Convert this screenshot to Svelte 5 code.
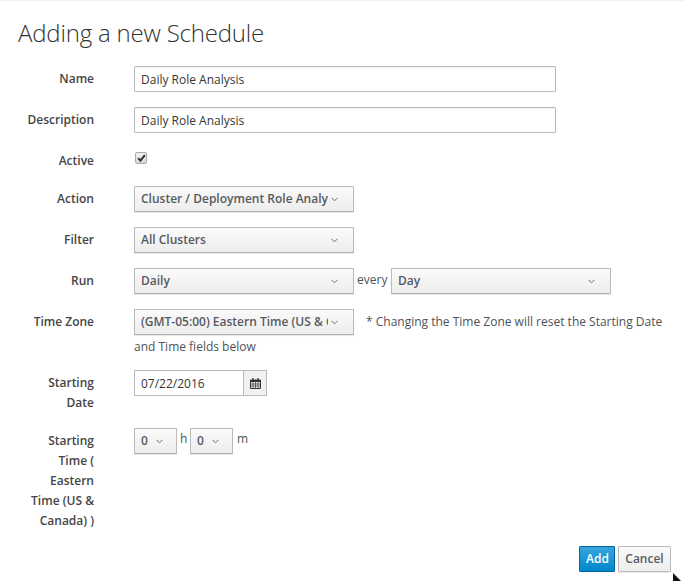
<script>
	const hours = ['0', '0'];
</script>

{#snippet chevron()}
	<svg class="chev" width="7" height="5" viewBox="0 0 7 5"><path d="M0.5 0.8 L3.5 3.8 L6.5 0.8" fill="none" stroke="#6a6e71" stroke-width="1" /></svg>
{/snippet}

{#snippet dropdown(text, cls)}
	<button type="button" class={'select ' + cls}>
		<span class="select-text">{text}</span>
		{@render chevron()}
	</button>
{/snippet}

<div class="modal">
	<h2 class="title">Adding a new Schedule</h2>

	<form class="form">
		<div class="row">
			<label class="label" for="name">Name</label>
			<input id="name" class="input" value="Daily Role Analysis" />
		</div>
		<div class="row">
			<label class="label" for="desc">Description</label>
			<input id="desc" class="input" value="Daily Role Analysis" />
		</div>
		<div class="row row-active">
			<span class="label">Active</span>
			<span class="check">
				<svg width="9" height="8" viewBox="0 0 10 9"><path d="M1.2 4.6 L3.8 7.4 L8.8 1.2" fill="none" stroke="#333" stroke-width="2.3" /></svg>
			</span>
		</div>
		<div class="row">
			<span class="label">Action</span>
			{@render dropdown('Cluster / Deployment Role Analysis', 'wide')}
		</div>
		<div class="row">
			<span class="label">Filter</span>
			{@render dropdown('All Clusters', 'wide')}
		</div>
		<div class="row">
			<span class="label">Run</span>
			<div class="inline">
				{@render dropdown('Daily', 'wide')}
				<span class="unit every">every</span>
				{@render dropdown('Day', 'wide')}
			</div>
		</div>
		<div class="row row-zone">
			<span class="label">Time Zone</span>
			<div class="zone">
				{@render dropdown('(GMT-05:00) Eastern Time (US & Canada)', 'wide')}
				<span class="zone-note"> * Changing the Time Zone will reset the Starting Date and Time fields below</span>
			</div>
		</div>
		<div class="row row-date">
			<span class="label">Starting Date</span>
			<div class="date-group">
				<input class="date-input" value="07/22/2016" />
				<span class="date-addon">
					<svg width="11" height="11" viewBox="0 0 11 11">
						<path d="M0.5 2 H10.5 V10.5 H0.5 Z" fill="none" stroke="#333" />
						<path d="M0.5 2 H10.5 V4 H0.5 Z" fill="#333" />
						<path d="M3 0 V2.5 M8 0 V2.5" stroke="#333" stroke-width="1.2" />
						<path d="M3 4 V10 M5.5 4 V10 M8 4 V10 M1 6 H10 M1 8 H10" stroke="#333" stroke-width="0.7" />
					</svg>
				</span>
			</div>
		</div>
		<div class="row">
			<span class="label">Starting Time ( Eastern Time (US & Canada) )</span>
			<div class="inline">
				{@render dropdown(hours[0], 'small')}
				<span class="unit unit-h">h</span>
				{@render dropdown(hours[1], 'small')}
				<span class="unit unit-m">m</span>
			</div>
		</div>
	</form>

	<div class="footer">
		<button type="button" class="btn btn-primary">Add</button>
		<button type="button" class="btn btn-default">Cancel</button>
	</div>

	<svg class="cursor" width="9" height="9" viewBox="0 0 9 9"><path d="M0 0 L8 8 H0 Z" fill="#111" /></svg>
</div>

<style>
	:global(body) {
		margin: 0;
		background: #fff;
	}

	.modal {
		position: relative;
		box-sizing: border-box;
		width: 684px;
		height: 583px;
		border-top: 1px solid #f2f2f2;
		font-family: 'Open Sans', sans-serif;
		font-size: 12px;
		line-height: 20px;
		color: #363636;
	}

	.title {
		margin: 0;
		padding: 15px 0 0 18px;
		height: 50px;
		box-sizing: border-box;
		font-size: 24px;
		font-weight: 300;
		line-height: 34px;
		letter-spacing: -0.19px;
		color: #333;
	}

	.form {
		display: flex;
		flex-direction: column;
		padding-top: 15px;
	}

	.row {
		display: flex;
		align-items: flex-start;
		margin-bottom: 15px;
	}

	.row-active {
		height: 23px;
	}

	.row-zone {
		margin-bottom: 0;
		height: 61px;
	}

	.row-date {
		height: 43px;
	}

	.label {
		flex: none;
		box-sizing: content-box;
		width: 70px;
		margin-left: 24px;
		margin-right: 40px;
		padding-top: 3px;
		text-align: right;
		font-weight: 600;
		color: #454545;
	}

	.input {
		box-sizing: border-box;
		width: 422px;
		height: 26px;
		padding: 2px 6px;
		border: 1px solid #bababa;
		border-radius: 1px;
		font: inherit;
		color: #363636;
		box-shadow: inset 0 1px 1px rgba(3, 3, 3, 0.05);
	}

	.check {
		display: flex;
		align-items: center;
		justify-content: center;
		box-sizing: border-box;
		width: 12px;
		height: 12px;
		margin: 4px 0 0 1px;
		border: 1px solid #a9a9a9;
		border-radius: 2px;
		background: linear-gradient(#f2f2f2, #d8d8d8);
	}

	.select {
		display: flex;
		align-items: center;
		box-sizing: border-box;
		height: 26px;
		padding: 0 6px;
		border: 1px solid #bbb;
		border-bottom-color: #b0b0b0;
		border-radius: 1px;
		background: linear-gradient(#fafafa, #ededed);
		box-shadow: 0 1px 1px rgba(0, 0, 0, 0.1);
		font: inherit;
		font-weight: 600;
		color: #565b61;
		text-align: left;
	}

	.wide {
		width: 220px;
	}

	.small {
		width: 43px;
	}

	.select-text {
		flex: 1;
		min-width: 0;
		overflow: hidden;
		white-space: nowrap;
	}

	.wide .select-text {
		margin-right: 3px;
	}

	.chev {
		flex: none;
		margin: 1px 9px 0 0;
	}

	.small .chev {
		margin: 1px 7px 0 0;
	}

	.inline {
		display: flex;
		align-items: flex-start;
	}

	.unit {
		font-weight: 400;
		color: #4d5258;
	}

	.every {
		width: 37px;
		padding-left: 3px;
		padding-top: 2px;
		box-sizing: border-box;
	}

	.unit-h {
		width: 13px;
		padding-left: 3px;
		padding-top: 1px;
		box-sizing: border-box;
	}

	.unit-m {
		padding-left: 4px;
		padding-top: 1px;
	}

	.zone {
		width: 540px;
	}

	.zone :global(.select) {
		float: left;
		margin-right: 12px;
		margin-bottom: -1px;
	}

	.zone-note {
		font-weight: 400;
		color: #4d5258;
		line-height: 25px;
	}

	.date-group {
		display: flex;
	}

	.date-input {
		box-sizing: border-box;
		width: 109px;
		height: 26px;
		padding: 2px 6px;
		border: 1px solid #bababa;
		border-right: 0;
		border-radius: 1px 0 0 1px;
		font: inherit;
		color: #363636;
	}

	.date-addon {
		display: flex;
		align-items: center;
		justify-content: center;
		box-sizing: border-box;
		width: 24px;
		height: 26px;
		border: 1px solid #bababa;
		background: #f1f1f1;
	}

	.footer {
		position: absolute;
		right: 13px;
		top: 545px;
		display: flex;
		gap: 3px;
	}

	.btn {
		box-sizing: border-box;
		height: 26px;
		padding: 0 6px;
		border-radius: 1px;
		font: inherit;
		font-weight: 600;
	}

	.btn-primary {
		width: 36px;
		border: 1px solid #00659c;
		background: linear-gradient(#39a5dc, #0088ce);
		color: #fff;
	}

	.btn-default {
		width: 53px;
		border: 1px solid #bbb;
		background: linear-gradient(#fafafa, #ededed);
		color: #565b61;
		box-shadow: 0 1px 1px rgba(0, 0, 0, 0.1);
	}

	.cursor {
		position: absolute;
		left: 673px;
		top: 572px;
	}
</style>
